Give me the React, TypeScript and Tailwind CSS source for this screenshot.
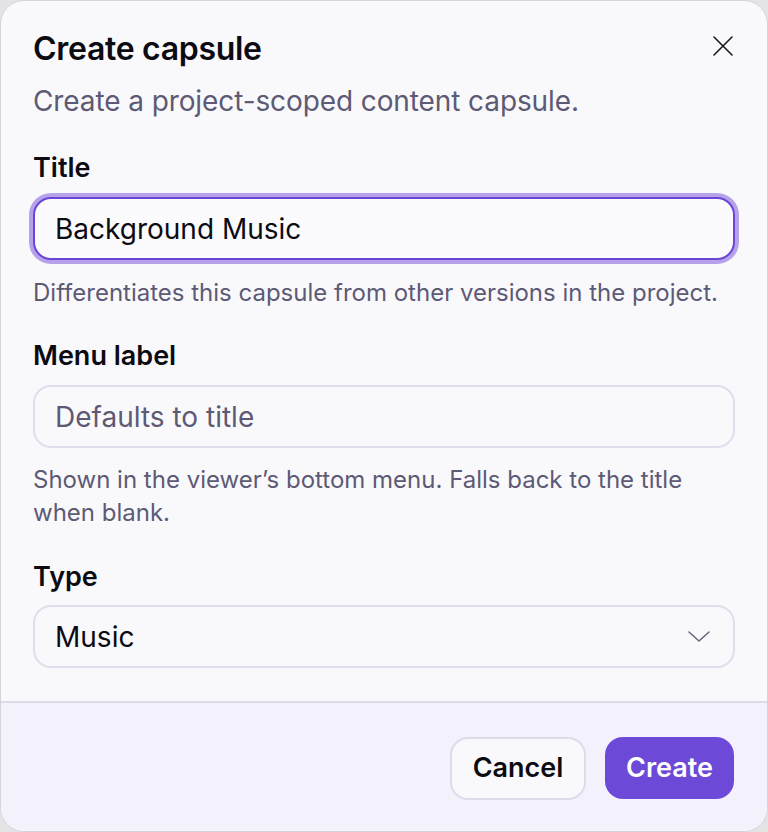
import React from "react";

export default function App() {
  return (
    <div className="w-[768px] h-[832px] bg-[#e4e4e6]" style={{ fontFamily: "Inter, 'Noto Sans', sans-serif" }}>
      <div className="relative w-[768px] h-[832px] rounded-[24px] border border-[#d4d4d8] bg-[#f9f9fc] overflow-hidden flex flex-col">
        <button className="absolute right-[32px] top-[33px] w-[24px] h-[24px] flex items-center justify-center text-[#18181b]">
          <svg width="24" height="24" viewBox="0 0 24 24" fill="none" stroke="currentColor" strokeWidth="1.6" strokeLinecap="round">
            <path d="M3 3L21 21M21 3L3 21" />
          </svg>
        </button>
        <div className="flex flex-col px-[32px] pt-[28px] pb-[33px]">
          <h2 className="text-[32px] leading-[40px] font-semibold text-[#0c0b12] tracking-[-0.3px]">Create capsule</h2>
          <p className="mt-[15px] text-[28px] leading-[34px] text-[#5d5a75] tracking-[-0.1px]">Create a project-scoped content capsule.</p>

          <label className="mt-[35px] text-[27px] leading-[30px] font-semibold text-[#0c0b12]">Title</label>
          <div className="mt-[14px] h-[63px] rounded-[18px] border-[2px] border-[#6b45d6] bg-[#fbfbfd] shadow-[0_0_0_4px_#b6a2ea] flex items-center px-[20px] text-[28px] text-[#0c0b12]">
            Background Music
          </div>
          <p className="mt-[18px] text-[24px] leading-[30px] text-[#5d5a75]">Differentiates this capsule from other versions in the project.</p>

          <label className="mt-[33px] text-[27px] leading-[30px] font-semibold text-[#0c0b12]">Menu label</label>
          <div className="mt-[14px] h-[63px] rounded-[18px] border-[2px] border-[#e0deed] bg-[#f9f9fc] flex items-center px-[20px] text-[28px] text-[#5d5a75]">
            Defaults to title
          </div>
          <p className="mt-[15px] text-[24px] leading-[33px] text-[#5d5a75]">Shown in the viewer’s bottom menu. Falls back to the title when blank.</p>

          <label className="mt-[33px] text-[27px] leading-[30px] font-semibold text-[#0c0b12]">Type</label>
          <div className="mt-[13px] h-[63px] rounded-[18px] border-[2px] border-[#e0deed] bg-[#f9f9fc] flex items-center justify-between pl-[20px] pr-[22px] text-[28px] text-[#0c0b12]">
            <span>Music</span>
            <svg width="24" height="14" viewBox="0 0 24 14" fill="none" stroke="#6b6880" strokeWidth="1.6" strokeLinecap="round" strokeLinejoin="round">
              <path d="M2 2L12 11L22 2" />
            </svg>
          </div>
        </div>
        <div className="flex-1 border-t-[2px] border-[#dedbea] bg-[#f3f1fc] flex justify-end items-start pt-[34px] pr-[33px] gap-[19px]">
          <button className="h-[63px] w-[136px] rounded-[18px] border-[2px] border-[#dedbea] bg-[#f9f9fc] text-[27px] font-semibold text-[#0c0b12]">Cancel</button>
          <button className="h-[62px] w-[129px] rounded-[18px] bg-[#6d49d8] text-[27px] font-semibold text-white">Create</button>
        </div>
      </div>
    </div>
  );
}
